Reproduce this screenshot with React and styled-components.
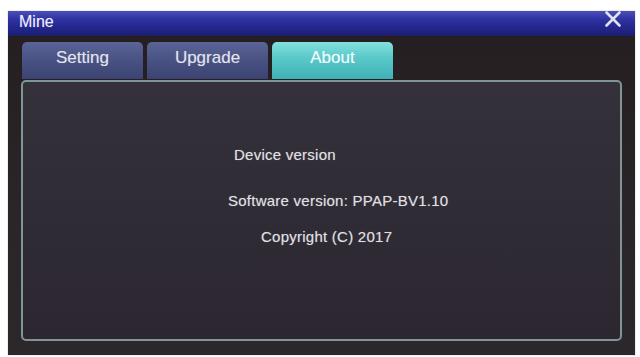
import React, { useState } from 'react'
import styled, { createGlobalStyle } from 'styled-components'

const Global = createGlobalStyle`
  html, body {
    margin: 0;
    background: #ffffff;
  }
  body {
    padding: 11px 5px 2px 8px;
    font-family: "Liberation Sans", Arial, sans-serif;
  }
`;

const Window = styled.div`
  width: 627px;
  height: 344px;
  display: flex;
  flex-direction: column;
  background: linear-gradient(180deg, #241e20 0%, #2a2528 60%, #2b272a 100%);
  box-shadow: 0 0 1px rgba(0, 0, 0, 0.4);
`;

const TitleBar = styled.div`
  height: 25px;
  display: flex;
  align-items: center;
  padding: 0 12px 0 11px;
  background: linear-gradient(180deg, #4b50b8 0%, #2e31a0 35%, #23258a 70%, #1c1e6e 100%);
  position: relative;
`;

const Title = styled.span`
  color: #eef0ff;
  font-size: 16px;
  margin-top: -4px;
  text-shadow: 0 0 1px rgba(255, 255, 255, 0.3);
`;

const Close = styled.button`
  position: absolute;
  right: 13px;
  top: -1px;
  width: 18px;
  height: 18px;
  padding: 0;
  border: none;
  background: none;
  cursor: pointer;
`;

const TabRow = styled.div`
  display: flex;
  gap: 4px;
  padding: 6px 0 0 14px;
  height: 37px;
`;

const Tab = styled.button`
  width: 121px;
  height: 37px;
  border: none;
  border-radius: 5px 5px 0 0;
  font-family: inherit;
  font-size: 17px;
  padding: 0 0 5px;
  cursor: pointer;
  text-shadow: 0 0 1px rgba(255, 255, 255, 0.3);
  color: ${({ active }) => active ? '#f4ffff' : '#e2e4ee'};
  background: ${({ active }) => active
    ? 'linear-gradient(180deg, #84e0de 0%, #5ccaca 40%, #3fb1b6 100%)'
    : 'linear-gradient(180deg, #5a6496 0%, #4a5384 45%, #3b4372 100%)'};
`;

const Panel = styled.div`
  flex: 1;
  margin: 1px 13px 14px;
  border: 2px solid #7f9596;
  border-radius: 5px;
  background: linear-gradient(180deg, #34313a 0%, #2f2b34 60%, #2c2630 100%);
  display: flex;
  flex-direction: column;
`;

const Line = styled.div`
  color: #e0e0e4;
  font-size: 15px;
  line-height: 18px;
  letter-spacing: 0.25px;
  text-shadow: 0 0 1px rgba(255, 255, 255, 0.35);
  padding-left: ${({ indent }) => indent}px;
  margin-top: ${({ top }) => top}px;
`;

const tabs = ['Setting', 'Upgrade', 'About']

const App = () => {
  const [tab, setTab] = useState('About')

  return (
    <>
      <Global />
      <Window>
        <TitleBar>
          <Title>Mine</Title>
          <Close aria-label="close">
            <svg width="18" height="18" viewBox="0 0 18 18">
              <path d="M2.5 2.5 L15.5 15.5 M15.5 2.5 L2.5 15.5" stroke="#dfe4f2" strokeWidth="2.6" strokeLinecap="round" />
            </svg>
          </Close>
        </TitleBar>
        <TabRow>
          {tabs.map(t => (
            <Tab key={t} active={tab === t} onClick={() => setTab(t)}>{t}</Tab>
          ))}
        </TabRow>
        <Panel>
          <Line indent={211} top={64}>Device version</Line>
          <Line indent={205} top={28}>Software version: PPAP-BV1.10</Line>
          <Line indent={238} top={18}>Copyright (C) 2017</Line>
        </Panel>
      </Window>
    </>
  )
}

export default App;
